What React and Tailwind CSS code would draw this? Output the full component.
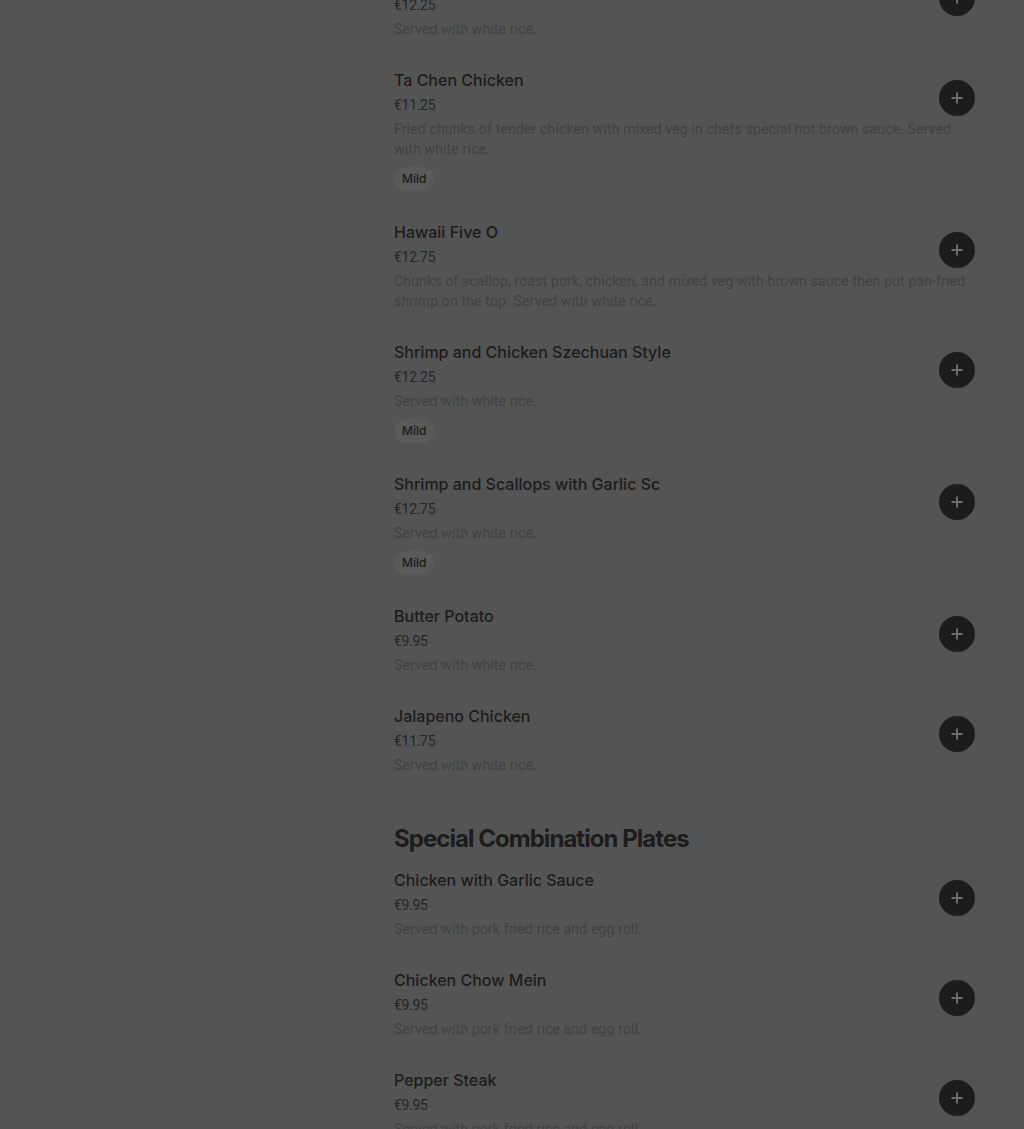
import React from "react";

const sections = [
  {
    title: null,
    items: [
      { name: "Szechuan Chicken", price: "€12.25", desc: "Served with white rice." },
      {
        name: "Ta Chen Chicken",
        price: "€11.25",
        desc: "Fried chunks of tender chicken with mixed veg in chefs special hot brown sauce. Served with white rice.",
        tag: "Mild",
      },
      {
        name: "Hawaii Five O",
        price: "€12.75",
        desc: "Chunks of scallop, roast pork, chicken, and mixed veg with brown sauce then put pan-fried shrimp on the top. Served with white rice.",
      },
      { name: "Shrimp and Chicken Szechuan Style", price: "€12.25", desc: "Served with white rice.", tag: "Mild" },
      { name: "Shrimp and Scallops with Garlic Sc", price: "€12.75", desc: "Served with white rice.", tag: "Mild" },
      { name: "Butter Potato", price: "€9.95", desc: "Served with white rice." },
      { name: "Jalapeno Chicken", price: "€11.75", desc: "Served with white rice." },
    ],
  },
  {
    title: "Special Combination Plates",
    items: [
      { name: "Chicken with Garlic Sauce", price: "€9.95", desc: "Served with pork fried rice and egg roll." },
      { name: "Chicken Chow Mein", price: "€9.95", desc: "Served with pork fried rice and egg roll." },
      { name: "Pepper Steak", price: "€9.95", desc: "Served with pork fried rice and egg roll." },
    ],
  },
];

function AddButton() {
  return (
    <button className="mt-3 flex h-9 w-9 shrink-0 items-center justify-center rounded-full bg-[#1c1c1c]">
      <svg width="14" height="14" viewBox="0 0 14 14" fill="none">
        <path d="M7 1.5v11M1.5 7h11" stroke="#6c6c6c" strokeWidth="2" />
      </svg>
    </button>
  );
}

function MenuItem({ item }) {
  return (
    <li className="pt-[14px] pb-[15px]">
      <div className="flex items-start justify-between">
        <div>
          <h3 className="text-base leading-6 font-medium text-[#1c1c1c]">{item.name}</h3>
          <p className="mt-[3px] font-['Roboto',sans-serif] text-sm leading-5 tracking-[-0.3px] text-[#262626]">
            {item.price}
          </p>
        </div>
        <AddButton />
      </div>
      <p className="mt-[3px] font-['Roboto',sans-serif] text-sm leading-5 tracking-[0.16px] text-[#424242]">
        {item.desc}
      </p>
      {item.tag && (
        <span className="mt-2 inline-flex h-6 items-center rounded-full bg-[#5a5a5a] px-2 text-xs font-medium text-[#1c1c1c]">
          {item.tag}
        </span>
      )}
    </li>
  );
}

export default function App() {
  return (
    <div className="min-h-screen overflow-hidden bg-[#545454] font-['Inter',sans-serif]">
      <div className="flex pr-[49px]">
        <aside className="w-[394px] shrink-0" />
        <main className="-mt-[46px] flex-1">
          {sections.map((section, i) => (
            <section key={i} className={section.title ? "mt-[33px]" : ""}>
              {section.title && (
                <h2 className="text-2xl leading-[31px] font-bold tracking-[-0.04em] text-[#1c1c1c]">
                  {section.title}
                </h2>
              )}
              <ul>
                {section.items.map((item) => (
                  <MenuItem key={item.name} item={item} />
                ))}
              </ul>
            </section>
          ))}
        </main>
      </div>
    </div>
  );
}
